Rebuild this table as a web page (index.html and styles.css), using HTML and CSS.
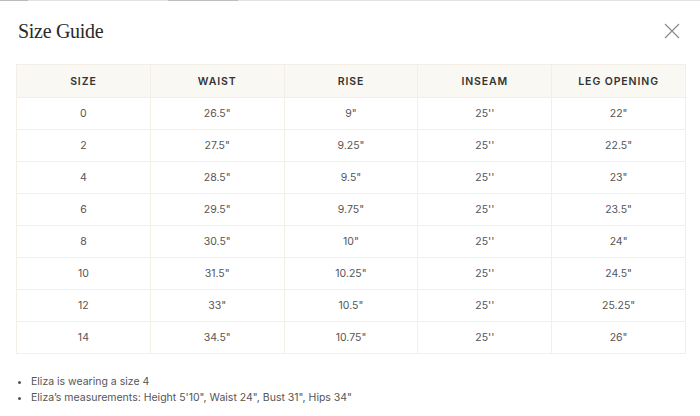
FILE: index.html
```html
<!DOCTYPE html>
<html>
<head>
<meta charset="utf-8">
<link rel="stylesheet" href="styles.css">
</head>
<body>
<div class="topline"></div>
<div class="modal">
  <div class="head">
    <h2 class="title">Size Guide</h2>
    <button class="close" aria-label="Close">
      <svg width="16" height="16" viewBox="0 0 16 16"><path d="M1 1L15 15M15 1L1 15" stroke="#8a8a8a" stroke-width="1.2" fill="none"/></svg>
    </button>
  </div>
  <table class="sizes">
    <thead>
      <tr><th>SIZE</th><th>WAIST</th><th>RISE</th><th>INSEAM</th><th>LEG OPENING</th></tr>
    </thead>
    <tbody>
      <tr><td>0</td><td>26.5"</td><td>9"</td><td>25''</td><td>22"</td></tr>
      <tr><td>2</td><td>27.5"</td><td>9.25"</td><td>25''</td><td>22.5"</td></tr>
      <tr><td>4</td><td>28.5"</td><td>9.5"</td><td>25''</td><td>23"</td></tr>
      <tr><td>6</td><td>29.5"</td><td>9.75"</td><td>25''</td><td>23.5"</td></tr>
      <tr><td>8</td><td>30.5"</td><td>10"</td><td>25''</td><td>24"</td></tr>
      <tr><td>10</td><td>31.5"</td><td>10.25"</td><td>25''</td><td>24.5"</td></tr>
      <tr><td>12</td><td>33"</td><td>10.5"</td><td>25''</td><td>25.25"</td></tr>
      <tr><td>14</td><td>34.5"</td><td>10.75"</td><td>25''</td><td>26"</td></tr>
    </tbody>
  </table>
  <ul class="notes">
    <li>Eliza is wearing a size 4</li>
    <li>Eliza’s measurements: Height 5'10", Waist 24", Bust 31", Hips 34"</li>
  </ul>
</div>
</body>
</html>
```
FILE: styles.css
```css
html, body {
  margin: 0;
  padding: 0;
  background: #fff;
}
.topline {
  height: 1px;
  background: linear-gradient(90deg, #bbb 0, #bbb 4%, #e2e2e2 4%, #e2e2e2 24%, #bdbdbd 24%, #bdbdbd 34%, #e2e2e2 34%, #e2e2e2 100%);
}
.modal {
  padding: 0 14px 0 16px;
  font-family: Inter, "Liberation Sans", sans-serif;
}
.head {
  display: flex;
  justify-content: space-between;
  align-items: center;
  height: 63px;
}
.title {
  margin: 0 0 0 2px;
  font-family: "Liberation Serif", serif;
  font-weight: normal;
  font-size: 20px;
  letter-spacing: -0.3px;
  color: #2a2a2a;
  padding-bottom: 2px;
}
.close {
  border: 0;
  background: none;
  padding: 0;
  margin: 0 6px 3px 0;
  display: flex;
}
.sizes {
  width: 670px;
  border-collapse: collapse;
  table-layout: fixed;
  border: 1px solid #f3efe6;
}
.sizes th, .sizes td {
  border: 1.5px solid #f3efe6;
  text-align: center;
  font-size: 10.5px;
}
.sizes th {
  background: #faf8f2;
  height: 30px;
  font-weight: 600;
  letter-spacing: 0.9px;
  color: #333;
}
.sizes td {
  height: 29px;
  color: #555;
}
.notes {
  margin: 20px 0 0;
  padding-left: 15px;
  font-size: 10.5px;
  color: #555;
  line-height: 16px;
}
.notes li {
  padding-left: 0;
}
```
